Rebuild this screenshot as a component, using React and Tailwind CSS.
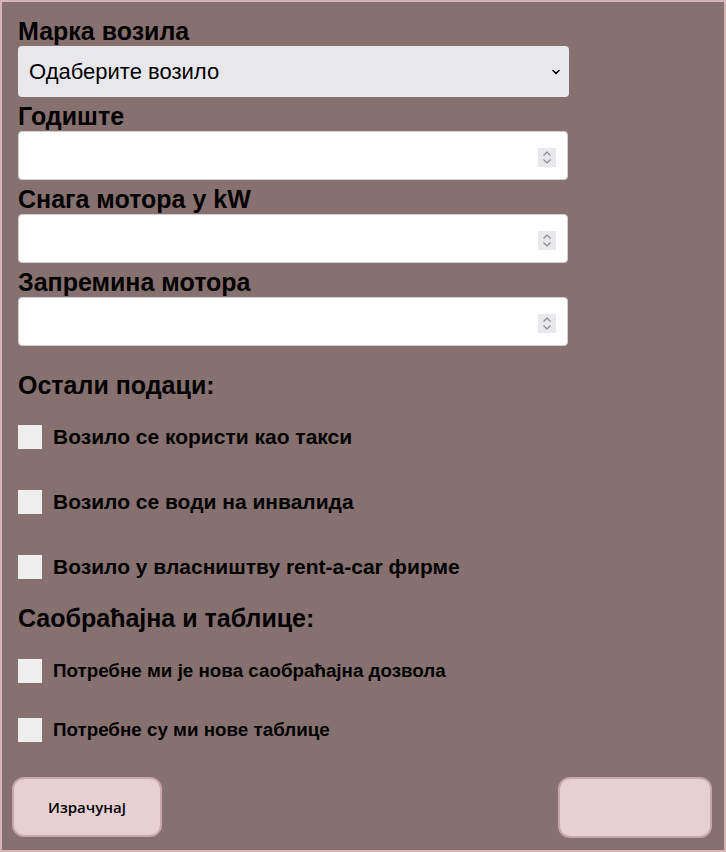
import { ChevronDown } from 'lucide-react'

// spinner drawn by hand, headless chrome hides it until hover
function Spinner() {
  return (
    <div className="absolute right-[11px] top-[16px] w-[18px] h-[19px] bg-[#e9e9ed] flex items-center justify-center">
      <svg width="10" height="15" viewBox="0 0 10 15" fill="none" stroke="#8a8a8a" strokeWidth="1.2">
        <path d="M1.5 5.5 L5 2 L8.5 5.5" />
        <path d="M1.5 9.5 L5 13 L8.5 9.5" />
      </svg>
    </div>
  )
}

function NumberField({ label }) {
  return (
    <div className="mt-[7px]">
      <p className="text-[25px] leading-[25px] font-bold text-black">{label}</p>
      <div className="relative mt-[2px] w-[550px] h-[49px] bg-white rounded-[4px] border border-[#cfcfcf]">
        <input type="text" className="w-full h-full bg-transparent outline-none px-3" />
        <Spinner />
      </div>
    </div>
  )
}

function Check({ label, small }) {
  return (
    <label className="flex items-center gap-[11px] h-[24px]">
      <span className="w-[24px] h-[24px] bg-[#efeeee] shrink-0" />
      <span className={`${small ? 'text-[18.8px]' : 'text-[21px]'} leading-[24px] font-bold text-black`}>{label}</span>
    </label>
  )
}

export default function App() {
  return (
    <div
      className="w-[726px] h-[852px] bg-[#877170] border-[2px] border-[#d6b4b4] flex flex-col"
      style={{ fontFamily: '"Liberation Sans", Arial, sans-serif' }}
    >
      <div className="pl-[16px] pt-[17px]">
        {/* марка */}
        <p className="text-[25px] leading-[25px] font-bold text-black">Марка возила</p>
        <div className="mt-[2px] w-[551px] h-[51px] bg-[#e8e7ec] rounded-[4px] flex items-center justify-between pl-[11px] pr-[7px]">
          <span className="text-[22px] text-black">Одаберите возило</span>
          <ChevronDown className="w-[12px] h-[12px] text-black" strokeWidth={3} />
        </div>

        <NumberField label="Годиште" />
        <NumberField label="Снага мотора у kW" />
        <NumberField label="Запремина мотора" />

        <p className="mt-[27px] text-[25px] leading-[25px] font-bold text-black">Остали подаци:</p>
        <div className="mt-[27px] flex flex-col gap-[41px]">
          <Check label="Возило се користи као такси" />
          <Check label="Возило се води на инвалида" />
          <Check label="Возило у власништву rent-a-car фирме" />
        </div>

        <p className="mt-[27px] text-[25px] leading-[25px] font-bold text-black">Саобраћајна и таблице:</p>
        <div className="mt-[28px] flex flex-col gap-[35px]">
          <Check small label="Потребне ми је нова саобраћајна дозвола" />
          <Check small label="Потребне су ми нове таблице" />
        </div>
      </div>

      <div className="mt-[35px] pl-[10px] pr-[12px] flex justify-between items-start">
        <button
          className="w-[150px] h-[60px] bg-[#e6d0d2] border-[2px] border-[#c9a6a8] rounded-[12px] text-[15px] font-semibold text-black"
          style={{ fontFamily: '"Open Sans", "Noto Sans", sans-serif' }}
        >
          Израчунај
        </button>
        <button className="w-[154px] h-[61px] bg-[#e6d0d2] border-[2px] border-[#c9a6a8] rounded-[12px]" />
      </div>
    </div>
  )
}
